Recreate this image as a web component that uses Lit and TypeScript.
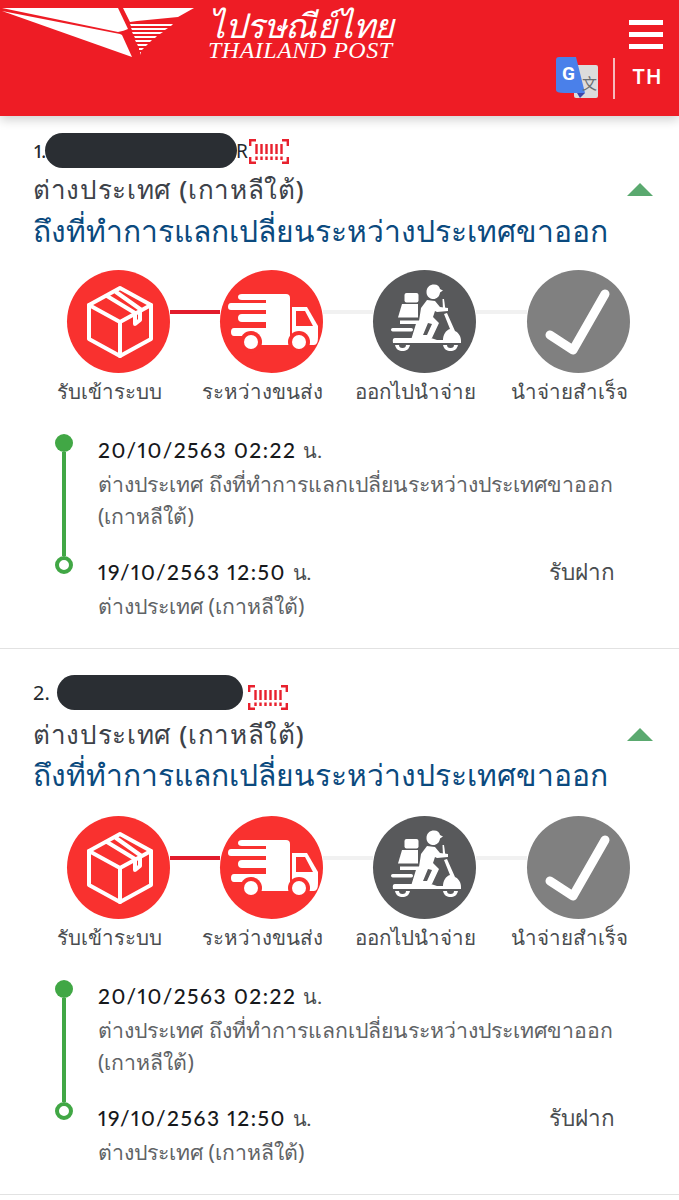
import { LitElement, html, css, svg } from "lit";
import { customElement } from "lit/decorators.js";

const boxIcon = svg`<g fill="none" stroke="#fff" stroke-width="4" stroke-linejoin="round" stroke-linecap="round">
<path d="M53 18 84 35V69L53 86 22 69V35Z"/><path d="M22 35 53 52 84 35M53 52V86"/><path d="M40 26 68 43M49 22 73 39"/><path d="M68 43V54L73 50V39"/></g>`;

const truckIcon = svg`<g fill="#fff">
<path d="M30 24H66Q70 24 70 28V75H24V66H14Q11 66 11 62Q11 58 14 58H46V52H22Q18 52 18 48Q18 44 22 44H46V40H11Q8 40 8 37Q8 33 11 33H46V30H22Q18 30 18 27Q18 24 22 24Z"/>
<path d="M72 37H87L98 56V67Q98 75 94 75H72Z"/></g>
<path fill="#f9312f" d="M76 41H85L93 56H76Z"/>
<circle cx="31" cy="72" r="11" fill="#f9312f"/><circle cx="31" cy="72" r="7" fill="#fff"/>
<circle cx="79" cy="72" r="11" fill="#f9312f"/><circle cx="79" cy="72" r="7" fill="#fff"/>`;

const scooterIcon = svg`<g fill="#fff">
<path d="M53.5 22C53.5 17 57 14.5 61 14.5 64.5 14.5 66.5 16.5 67 19L70 20.5 67 22.5C66.5 27 63 29.5 59.5 29 56 28.5 53.5 26 53.5 22Z"/>
<rect x="31.5" y="23" width="14" height="9.5" rx="2"/>
<path d="M29 34H45V47.500H25Z"/>
<path fill-rule="evenodd" d="M54 30 62 31 67 37 75 38V41L64 42 62 41 60 47 66 53 59 68H47L46 51 48 38ZM55 53 50 65H54L59 54Z"/>
<path d="M44 50.500H47V68L38 70ZM27 50.500H44V54H27Z"/>
<rect x="18" y="58" width="22" height="3.500" rx="1.700"/>
<path d="M69.500 29H71L72.500 40H70Z"/>
<path d="M71 44 74 43 82 61C86 63 88 67 88 71V73H20Q19 68 22 68H58L64 70H70C70 65 73 60 77 59Z"/>
<path d="M22 75H37C36 79.500 33 81 29.500 81 26 81 23 79.500 22 75Z"/>
<path d="M70 75H85C84 79.500 81 81 77.500 81 74 81 71 79.500 70 75Z"/>
</g>
<path d="M26 75A3.500 3 0 0 0 33 75ZM74 75A3.500 3 0 0 0 81 75Z" fill="#58595b"/>`;

const checkIcon = svg`<path d="M23 65 46 80 78 24" fill="none" stroke="#fff" stroke-width="9" stroke-linecap="round" stroke-linejoin="round"/>`;

const steps = [
  { label: "รับเข้าระบบ", cls: "red", icon: boxIcon },
  { label: "ระหว่างขนส่ง", cls: "red", icon: truckIcon },
  { label: "ออกไปนำจ่าย", cls: "dark", icon: scooterIcon },
  { label: "นำจ่ายสำเร็จ", cls: "mid", icon: checkIcon },
];

const barcode = html`<svg class="barcode" width="40" height="25" viewBox="0 0 40 25">
  <path d="M7 1.200H1.200V7M33 1.200H38.800V7M7 23.800H1.200V18M33 23.800H38.800V18" fill="none" stroke="#e8212e" stroke-width="2.400"/>
  <path d="M7.500 5V15M7.500 17.500V21M12.500 5V15M12.500 17.500V21M17.500 5V15M17.500 17.500V21M22.500 5V15M22.500 17.500V21M27.500 5V15M27.500 17.500V21M32.500 5V15M32.500 17.500V21" fill="none" stroke="#e8212e" stroke-width="2.400"/>
</svg>`;

const shipments = [
  { n: "1.", first: true, tail: "R" },
  { n: "2.", first: false, tail: "" },
];

@customElement("app-root")
export class AppRoot extends LitElement {
  static styles = css`
    :host { display: block; width: 679px; background: #fff; font-family: "Noto Sans", "DejaVu Sans", sans-serif; overflow: hidden; height: 1200px; }
    header { height: 116px; background: #ee1c25; box-shadow: 0 4px 10px rgba(0,0,0,.18); display: flex; justify-content: space-between; position: relative; z-index: 1; }
    .logo { display: flex; align-items: flex-start; }
    .wing { display: block; margin-right: 11px; }
    .brand { display: flex; flex-direction: column; color: #fff; font-family: "Liberation Serif", "Noto Sans", serif; font-style: italic; width: 190px; }
    .brand-th { font-size: 34px; line-height: 34px; margin-top: 8px; font-family: "Noto Sans", sans-serif; font-weight: 300; letter-spacing: -.5px; white-space: nowrap; }
    .brand-en { font-size: 24px; line-height: 16px; letter-spacing: .5px; white-space: nowrap; }
    .tools { width: 123px; padding: 20px 16px 0 0; box-sizing: border-box; display: flex; flex-direction: column; align-items: flex-end; }
    .burger { display: flex; flex-direction: column; gap: 7px; width: 34px; }
    .burger i { display: block; height: 5px; background: #fff; }
    .lang { display: flex; align-items: center; margin-top: 8px; }
    .translate { display: block; margin-right: 15px; }
    .sep { width: 2px; height: 41px; background: #f7b9bc; margin-right: 17px; }
    .th { color: #fff; font-family: "Inter", sans-serif; font-size: 20px; font-weight: 600; letter-spacing: 1px; width: 32px; margin-right: -1px; margin-top: -2px; }

    .card { padding: 26px 26px 26px 33px; border-bottom: 1px solid #e2e2e2; }
    .card.first { padding-top: 17px; }
    .id-row { display: flex; align-items: center; height: 35px; font-size: 20px; color: #24292e; }
    .num { width: 17px; }
    .first .num { width: 12px; font-size: 18px; letter-spacing: -2px; font-weight: 500; }
    .pill { display: block; width: 186px; height: 35px; border-radius: 18px; background: #2a2e33; margin-left: 7px; margin-right: 5px; }
    .first .pill { width: 192px; margin-left: 0; margin-right: -1px; }
    .tail { font-size: 19px; width: 0; }
    .first .tail { width: 7px; }
    .barcode { display: block; margin-top: 10px; }
    .first .barcode { margin-left: 6px; margin-top: 2px; }
    .status-line { display: flex; justify-content: space-between; align-items: center; margin-top: 7px; }
    .first .status-line { margin-top: 4px; }
    .country { font-size: 26px; line-height: 34px; font-weight: 500; letter-spacing: .65px; color: #3d4249; }
    .caret { width: 0; height: 0; border-left: 13px solid transparent; border-right: 13px solid transparent; border-bottom: 13px solid #5aa96f; }
    .title { font-size: 30px; line-height: 44px; font-weight: 500; color: #0b4a7e; margin-top: 2px; white-space: nowrap; }
    .first .title { margin-top: 3px; }
    .steps { display: grid; grid-template-columns: 103px 50px 103px 50px 103px 51px 103px; margin: 19px 0 0 34px; }
    .first .steps { margin-top: 17px; }
    .circle { width: 103px; height: 103px; border-radius: 50%; display: block; }
    .circle.red { background: #f9312f; }
    .circle.dark { background: #58595b; }
    .circle.mid { background: #808080; }
    .link { height: 4px; margin-top: 40px; background: #f1f1f1; }
    .link.on { background: #e21c2c; }
    .label { grid-row: 2; justify-self: center; white-space: nowrap; font-size: 20.500px; line-height: 30px; margin: 3px 18px 0 0; color: #4a4d50; }
    .timeline { margin: 28px 0 0 22px; display: flex; flex-direction: column; }
    .event { display: grid; grid-template-columns: 18px 1fr; column-gap: 25px; }
    .rail { display: flex; flex-direction: column; align-items: center; }
    .dot { width: 18px; height: 18px; border-radius: 50%; background: #41a745; flex: none; }
    .ring { width: 18px; height: 18px; border-radius: 50%; border: 4px solid #41a745; box-sizing: border-box; flex: none; }
    .bar { width: 4px; flex: 1; background: #41a745; }
    .body { padding-bottom: 24px; }
    .event:last-child .body { padding-bottom: 0; }
    .date-line { display: flex; justify-content: space-between; width: 517px; line-height: 32px; margin-bottom: 2px; font-size: 21px; color: #17191c; }
    .date { font-family: "Lato", sans-serif; font-weight: 500; letter-spacing: 1.500px; font-variant-numeric: proportional-nums; }
    .unit { font-size: 20px; letter-spacing: 0; color: #4a4d50; font-weight: 400; }
    .where { font-size: 22.500px; color: #4a4d50; font-weight: 400; }
    .desc { font-size: 21.250px; line-height: 32px; color: #5f6366; }
  `;

  private shipment(s: { n: string; first: boolean; tail: string }) {
    return html`<section class="card ${s.first ? "first" : ""}">
      <div class="id-row"><span class="num">${s.n}</span><span class="pill"></span><span class="tail">${s.tail}</span>${barcode}</div>
      <div class="status-line"><div class="country">ต่างประเทศ (เกาหลีใต้)</div><div class="caret"></div></div>
      <div class="title">ถึงที่ทำการแลกเปลี่ยนระหว่างประเทศขาออก</div>
      <div class="steps">
        ${steps.map((st, i) => html`
          <svg class="circle ${st.cls}" viewBox="0 0 103 103">${st.icon}</svg>
          ${i < 3 ? html`<div class="link ${i === 0 ? "on" : ""}"></div>` : ""}`)}
        ${steps.map((st, i) => html`<div class="label" style="grid-column:${i * 2 + 1}">${st.label}</div>`)}
      </div>
      <div class="timeline">
        <div class="event">
          <div class="rail"><span class="dot"></span><span class="bar"></span></div>
          <div class="body">
            <div class="date-line"><span class="date">20/10/2563 02:22 <span class="unit">น.</span></span></div>
            <div class="desc">ต่างประเทศ ถึงที่ทำการแลกเปลี่ยนระหว่างประเทศขาออก (เกาหลีใต้)</div>
          </div>
        </div>
        <div class="event">
          <div class="rail"><span class="ring"></span></div>
          <div class="body">
            <div class="date-line"><span class="date">19/10/2563 12:50 <span class="unit">น.</span></span><span class="where">รับฝาก</span></div>
            <div class="desc">ต่างประเทศ (เกาหลีใต้)</div>
          </div>
        </div>
      </div>
    </section>`;
  }

  render() {
    return html`<header>
        <div class="logo">
          <svg class="wing" width="197" height="60" viewBox="0 0 197 60">
            <g fill="#fff">
              <path d="M2 8H118L128 29Q124 31 118 32Z"/>
              <path d="M2 11 120 34 122 35 132 57Z"/>
              <path d="M123 8H194L178 17 137 21 130 22Z"/>
              <path d="M130 24H173L171 26H131ZM131 28H168L165 30H132ZM132 32H163L160 34H133ZM134 36H157L155 38H135ZM135 40H152L150 42H136ZM137 44H148L146 46H138ZM139 48H144L142 50H139ZM140 52H141L140 55Z"/>
            </g>
          </svg>
          <div class="brand"><span class="brand-th">ไปรษณีย์ไทย</span><span class="brand-en">THAILAND POST</span></div>
        </div>
        <div class="tools">
          <div class="burger"><i></i><i></i><i></i></div>
          <div class="lang">
            <svg class="translate" width="42" height="42" viewBox="0 0 42 42">
              <rect x="18" y="8" width="24" height="33" rx="2" fill="#dcdcdc"/>
              <path d="M0 3Q0 0 3 0H20L29 36H8Q0 36 0 33Z" fill="#4a80ea"/>
              <path d="M21 36H29L24 41Z" fill="#3f47a8"/>
              <text x="6" y="23" font-family="Roboto, sans-serif" font-weight="700" font-size="19" fill="#fff">G</text>
              <text x="26" y="32" font-family="'Noto Sans CJK SC', sans-serif" font-size="15" fill="#6a6f72">文</text>
            </svg>
            <span class="sep"></span>
            <span class="th">TH</span>
          </div>
        </div>
      </header>
      ${shipments.map((s) => this.shipment(s))}`;
  }
}
